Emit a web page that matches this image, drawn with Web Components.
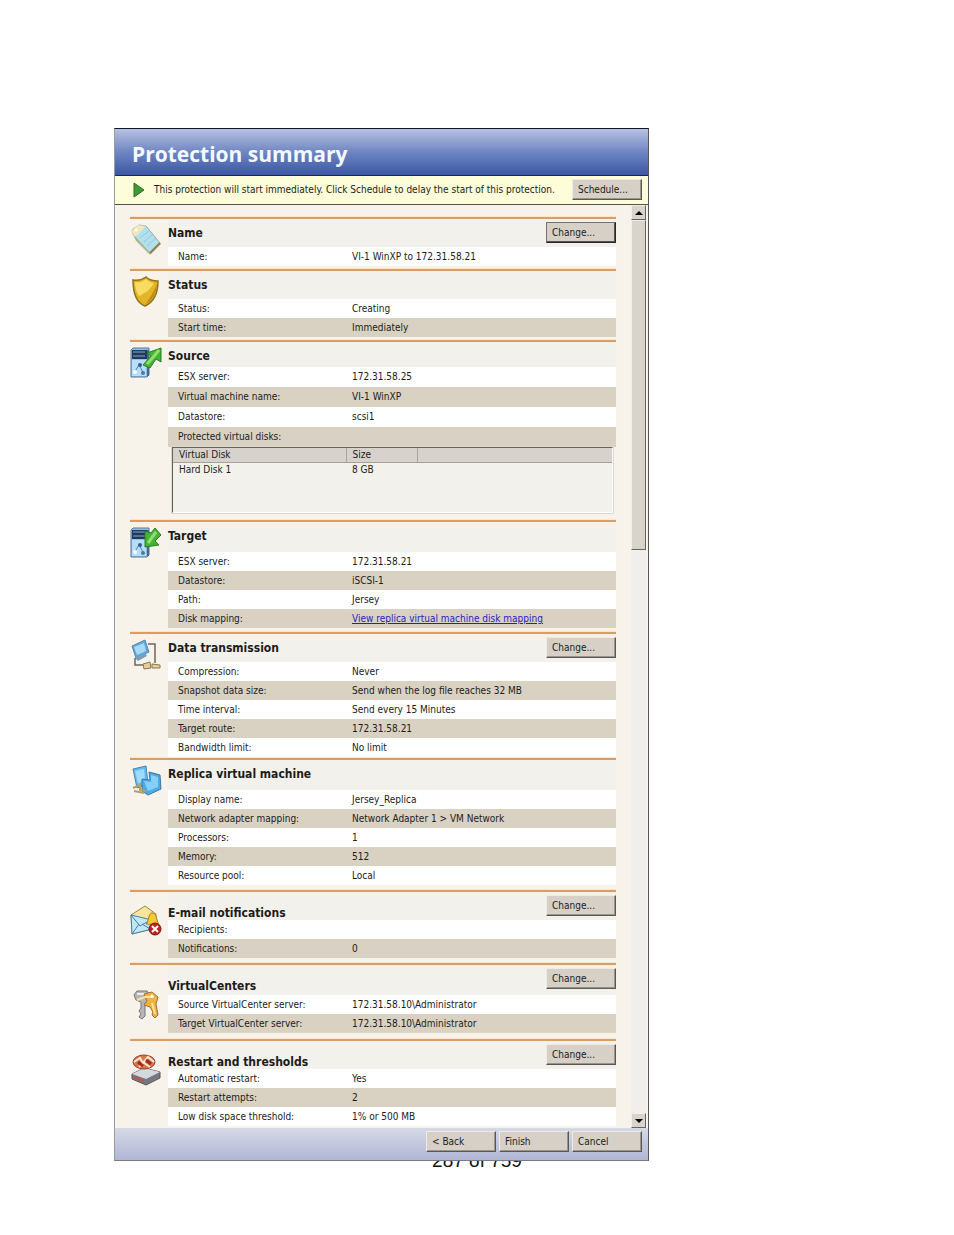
<!DOCTYPE html>
<html lang="en">
<head>
<meta charset="utf-8">
<title>Protection summary</title>
<style>
    body{
        margin: 0;
        background: white;
        color: #1c1c1c;
        font: 10px/19px "DejaVu Sans Condensed", "DejaVu Sans", sans-serif;
    }
    #page{
        display: grid;
        grid-template-columns: 114fr 535fr 305fr;
        padding-top: 128px;
    }
    #page ps-window{
        grid-column: 2;
    }
    #page-number{
        margin: -11px 0 0;
        text-align: center;
        font: 19px/22px "Liberation Sans", Arial, sans-serif;
        color: #111;
    }
    .roomy{
        --head: 30px;
    }
    .dense{
        --head: 25px;
        --row: 20px;
    }
    a{
        color: #2a1cc0;
    }
</style>
</head>
<body>

<main id="page">
    <ps-window heading="Protection summary">
        <ps-notice slot="notice">
            This protection will start immediately. Click Schedule to delay the start of this protection.
            <ps-button slot="action">Schedule...</ps-button>
        </ps-notice>

        <ps-section heading="Name" icon="tag" style="--tail:3px">
            <ps-button slot="action" focused>Change...</ps-button>
            <ps-row label="Name:">VI-1 WinXP to 172.31.58.21</ps-row>
        </ps-section>

        <ps-section heading="Status" icon="shield" style="--tail:3px">
            <ps-row label="Status:">Creating</ps-row>
            <ps-row label="Start time:" shaded>Immediately</ps-row>
        </ps-section>

        <ps-section heading="Source" icon="source" class="dense" style="--tail:7px">
            <ps-row label="ESX server:">172.31.58.25</ps-row>
            <ps-row label="Virtual machine name:" shaded>VI-1 WinXP</ps-row>
            <ps-row label="Datastore:">scsi1</ps-row>
            <ps-row label="Protected virtual disks:" shaded></ps-row>
            <ps-disks></ps-disks>
        </ps-section>

        <ps-section heading="Target" icon="target" class="roomy" style="--tail:4px">
            <ps-row label="ESX server:">172.31.58.21</ps-row>
            <ps-row label="Datastore:" shaded>iSCSI-1</ps-row>
            <ps-row label="Path:">Jersey</ps-row>
            <ps-row label="Disk mapping:" shaded><a href="#mapping">View replica virtual machine disk mapping</a></ps-row>
        </ps-section>

        <ps-section heading="Data transmission" icon="transmit" style="--tail:1px">
            <ps-button slot="action">Change...</ps-button>
            <ps-row label="Compression:">Never</ps-row>
            <ps-row label="Snapshot data size:" shaded>Send when the log file reaches 32 MB</ps-row>
            <ps-row label="Time interval:">Send every 15 Minutes</ps-row>
            <ps-row label="Target route:" shaded>172.31.58.21</ps-row>
            <ps-row label="Bandwidth limit:">No limit</ps-row>
        </ps-section>

        <ps-section heading="Replica virtual machine" icon="replica" class="roomy" style="--tail:5px">
            <ps-row label="Display name:">Jersey_Replica</ps-row>
            <ps-row label="Network adapter mapping:" shaded>Network Adapter 1 &gt; VM Network</ps-row>
            <ps-row label="Processors:">1</ps-row>
            <ps-row label="Memory:" shaded>512</ps-row>
            <ps-row label="Resource pool:">Local</ps-row>
        </ps-section>

        <ps-section heading="E-mail notifications" icon="mail" low style="--tail:5px">
            <ps-button slot="action">Change...</ps-button>
            <ps-row label="Recipients:"></ps-row>
            <ps-row label="Notifications:" shaded>0</ps-row>
        </ps-section>

        <ps-section heading="VirtualCenters" icon="keys" class="roomy" low style="--tail:6px;--icon-top:24px">
            <ps-button slot="action">Change...</ps-button>
            <ps-row label="Source VirtualCenter server:">172.31.58.10\Administrator</ps-row>
            <ps-row label="Target VirtualCenter server:" shaded>172.31.58.10\Administrator</ps-row>
        </ps-section>

        <ps-section heading="Restart and thresholds" icon="disk" low style="--tail:2px">
            <ps-button slot="action">Change...</ps-button>
            <ps-row label="Automatic restart:">Yes</ps-row>
            <ps-row label="Restart attempts:" shaded>2</ps-row>
            <ps-row label="Low disk space threshold:">1% or 500 MB</ps-row>
        </ps-section>

        <ps-button slot="buttons">&lt; Back</ps-button>
        <ps-button slot="buttons">Finish</ps-button>
        <ps-button slot="buttons">Cancel</ps-button>
    </ps-window>
</main>
<p id="page-number">287 of 759</p>

<script>
const server = `
    <path d="M1 3L3 1H19V28L17 30H1Z" fill="#8fc0e8" stroke="#56789c"/>
    <path d="M2 3H17V12H2Z" fill="#20395c"/>
    <path d="M3 5H15M3 9H15" stroke="#8ba7c6"/>
    <path d="M18 3V29" stroke="#3f6892" stroke-width="2"/>
    <path d="M2 13H16V29H2Z" fill="#b9dcf7"/>
    <path d="M4 26L9 18L14 27" stroke="#4887ba" fill="none"/>
    <circle cx="10" cy="18" r="2" fill="#2f6293"/><circle cx="5" cy="25" r="2" fill="#fff"/><circle cx="13" cy="26" r="2" fill="#477cad"/>`

const icons = {
    tag: `
        <path d="M1 7L8 1L16 2L31 20L20 31L6 17Z" fill="#b9b98e"/>
        <path d="M2 6L9 1L16 2L30 19L20 29L6 14Z" fill="#b4e0ec" stroke="#8fb3b0"/>
        <path d="M1 7L8 1L16 2L9 9L5 13Z" fill="#f3e6bd"/>
        <path d="M10 14L20 6M14 18L23 10M17 22L26 14" stroke="#8fc8dc"/>
        <path d="M20 29L30 19" stroke="#927e4e" stroke-width="2"/>
        <circle cx="6" cy="6" r="1.5" fill="#fff"/>`,
    shield: `
        <path d="M16 1C12 4 8 5 3 4C3 17 7 27 15 30C24 26 28 17 28 5C23 5 19 4 16 1Z" fill="#e3b426" stroke="#94711a" stroke-width="1.5"/>
        <path d="M16 3C12 6 9 7 5 6C5 12 7 17 9 20C14 18 20 14 24 7C21 7 18 5 16 3Z" fill="#f8dc62"/>
        <path d="M27 8C26 18 22 25 15 29C20 22 24 15 27 8Z" fill="#bd8c1b"/>`,
    source: server + `
        <path d="M13 18L21 9L17 6L31 1V15L26 12L20 21Z" fill="#45b335" stroke="#267c22"/>
        <path d="M17 17L25 8L29 3" stroke="#8fdd72" stroke-width="3" fill="none"/>`,
    target: server + `
        <path d="M31 8L25 1L21 6L15 4V20L29 18L25 14Z" fill="#45b335" stroke="#267c22"/>
        <path d="M26 5L18 16" stroke="#8fdd72" stroke-width="3"/>`,
    transmit: `
        <path d="M2 7L15 1L19 13L6 19Z" fill="#5aaae2" stroke="#5e87aa"/>
        <path d="M4 8L14 4L16 12L7 16Z" fill="#a9d9f8"/>
        <path d="M5 19L15 14L17 17L8 22Z" fill="#7f9cb8"/>
        <path d="M18 5H25V24M5 19V26H15" stroke="#6f675b" stroke-width="1.5" fill="none"/>
        <path d="M13 25L20 23L21 29L14 30ZM22 25L30 26V29H22Z" fill="#e4cf98" stroke="#887850"/>`,
    replica: `
        <path d="M3 4L16 1L18 19L7 23Z" fill="#67bbec" stroke="#4d82ac"/>
        <path d="M5 6L14 4L15 16L8 18Z" fill="#9edcfb"/>
        <path d="M12 14L20 15L19 7L30 10L31 24L18 30L12 26Z" fill="#4cabe5" stroke="#3c77a7"/>
        <path d="M14 16L21 17V10L28 12V22L18 26Z" fill="#86d0f8"/>
        <path d="M3 23L10 20V25L16 26M4 26L14 28" stroke="#b5a063" stroke-width="2" fill="none"/>`,
    mail: `
        <path d="M1 10L15 1L26 9V23L2 29Z" fill="#f5e69b" stroke="#9e8c40"/>
        <path d="M1 10L22 15V24L2 29Z" fill="#bfe9fb" stroke="#4b7ca5"/>
        <path d="M1 10L10 21L22 14M2 29L9 19M22 25L12 19" stroke="#4b7ca5" fill="none"/>
        <path d="M16 19C19 17 18 8 22 8C27 8 26 15 29 20Z" fill="#f5ca34" stroke="#a57f18"/>
        <circle cx="25" cy="24" r="6" fill="#bd2421" stroke="#7d1513"/>
        <path d="M22 21L28 27M28 21L22 27" stroke="#fff" stroke-width="2"/>`,
    keys: `
        <path d="M4 6L7 2H17L20 6V11L15 14V27L12 30L9 28L11 25L9 22L11 19V13L6 11Z" fill="#b8b5b5" stroke="#777"/>
        <path d="M7 5H16" stroke="#eee" stroke-width="2"/>
        <path d="M14 5L22 3L28 8L26 15L28 26L25 29L22 26L23 23L20 18L14 16L17 12Z" fill="#f0b243" stroke="#a1722b"/>
        <path d="M7 11L15 8L24 8M22 14L25 25" stroke="#fbe39b" stroke-width="2" fill="none"/>
        <circle cx="22" cy="7" r="1.5" fill="#fff"/>`,
    disk: `
        <path d="M2 20L14 14L30 18V24L16 31L2 25Z" fill="#76777f" stroke="#55565c"/>
        <path d="M2 20L14 14L30 18L16 25Z" fill="#d5d8df"/>
        <path d="M4 23L14 27" stroke="#c45145" stroke-width="2"/>
        <ellipse cx="14" cy="8" rx="11" ry="7" fill="#d97845" stroke="#8e4631"/>
        <path d="M4 8L10 4L13 9L18 3L24 8M9 13L14 9L20 13" stroke="#f8e7da" stroke-width="2" fill="none"/>
        <path d="M8 8L13 12M16 6L21 10" stroke="#a92a1e" stroke-width="3"/>`
}

class PsButton extends HTMLElement {
    constructor() {
        super();
        this.attachShadow({mode:'open'})

        this.shadowRoot.innerHTML = `
        <style>
            :host{
                display: block;
            }
            button{
                display: block;
                box-sizing: border-box;
                width: 70px;
                height: 21px;
                padding: 0 5px;
                border: 1px solid;
                border-color: #eeebe5 #5b5851 #5b5851 #eeebe5;
                box-shadow: inset -1px -1px #99958c;
                background: #d6d0c7;
                color: inherit;
                font: inherit;
                text-align: left;
            }
            :host([focused]) button{
                border-color: #77736b #2a2926 #2a2926 #77736b;
                box-shadow: inset -1px -1px #55524c;
            }
        </style>
        <button type="button"><slot></slot></button>
        `
    }
}

class PsNotice extends HTMLElement {
    constructor() {
        super();
        this.attachShadow({mode:'open'})

        this.shadowRoot.innerHTML = `
        <style>
            :host{
                display: flex;
                align-items: center;
                height: 27px;
                padding: 0 6px 1px 18px;
                border-bottom: 1px solid #55544c;
                background: #fdfdd9;
            }
            svg{
                flex: none;
                margin-right: 9px;
            }
            p{
                flex: 1;
                margin: 0;
                white-space: nowrap;
            }
        </style>
        <svg width="12" height="16" viewBox="0 0 12 16"><path d="M1 1L11 8L1 15Z" fill="#3f9a34" stroke="#2c6d27"/></svg>
        <p><slot></slot></p>
        <slot name="action"></slot>
        `
    }
}

class PsSection extends HTMLElement {
    constructor() {
        super();
        this.attachShadow({mode:'open'})

        this.shadowRoot.innerHTML = `
        <style>
            :host{
                display: grid;
                grid-template-columns: 38px 1fr;
                padding-bottom: var(--tail);
                border-top: 2px solid #dc9d62;
                box-shadow: 0 -1px #fbe6cb;
            }
            svg{
                margin-top: var(--icon-top, 5px);
            }
            :host([low]) svg{
                margin-top: var(--icon-top, 13px);
            }
            #icon{
                height: 0;
            }
            header{
                display: flex;
                align-items: flex-start;
                justify-content: space-between;
                height: var(--head, 28px);
                background: #f2f1eb;
            }
            h2{
                margin: 0;
                font-size: 12px;
                line-height: 28px;
            }
            :host([low]) h2{
                padding-top: 14px;
                line-height: 14px;
            }
            slot[name=action]{
                display: block;
                padding-top: 3px;
            }
        </style>
        <div id="icon"><svg width="32" height="32" viewBox="0 0 32 32" fill="none">${icons[this.getAttribute('icon')]}</svg></div>
        <div>
            <header>
                <h2>${this.getAttribute('heading')}</h2>
                <slot name="action"></slot>
            </header>
            <slot></slot>
        </div>
        `
    }
}

class PsRow extends HTMLElement {
    constructor() {
        super();
        this.attachShadow({mode:'open'})

        this.shadowRoot.innerHTML = `
        <style>
            :host{
                display: grid;
                grid-template-columns: 174px 1fr;
                height: var(--row, 19px);
                padding-left: 10px;
                line-height: var(--row, 19px);
                background: white;
                white-space: nowrap;
            }
            :host([shaded]){
                background: #d9d1c2;
            }
        </style>
        <span>${this.getAttribute('label')}</span>
        <span><slot></slot></span>
        `
    }
}

class PsDisks extends HTMLElement {
    constructor() {
        super();
        this.attachShadow({mode:'open'})

        this.shadowRoot.innerHTML = `
        <style>
            :host{
                display: block;
                box-sizing: border-box;
                height: 66px;
                margin: 0 3px 0 4px;
                border: 1px solid;
                border-color: #65625c #fff #fff #65625c;
                outline: 1px solid #dcdad0;
                background: #f2f1eb;
            }
            table{
                width: 100%;
                border-collapse: collapse;
                table-layout: fixed;
            }
            th, td{
                padding: 0 6px;
                font-weight: normal;
                line-height: 14px;
                text-align: left;
            }
            th{
                border-right: 1px solid #aaa69f;
                border-bottom: 1px solid #a5a19a;
                background: #d7d2cb;
            }
            th:last-child{
                border-right: 0;
            }
        </style>
        <table>
            <colgroup><col style="width:173px"><col style="width:71px"><col></colgroup>
            <thead><tr><th>Virtual Disk</th><th>Size</th><th></th></tr></thead>
            <tbody><tr><td>Hard Disk 1</td><td>8 GB</td><td></td></tr></tbody>
        </table>
        `
    }
}

class PsScrollbar extends HTMLElement {
    constructor() {
        super();
        this.attachShadow({mode:'open'})

        this.shadowRoot.innerHTML = `
        <style>
            :host{
                display: flex;
                flex-direction: column;
                width: 15px;
                background: #f1efeb;
            }
            button, #thumb{
                box-sizing: border-box;
                border: 1px solid;
                border-color: #f1eee9 #66635d #66635d #f1eee9;
                background: #d8d3cb;
            }
            button{
                display: grid;
                place-items: center;
                height: 15px;
                padding: 0;
            }
            #track{
                flex: 1;
            }
            #thumb{
                height: 37%;
            }
        </style>
        <button type="button" aria-label="Scroll up"><svg width="8" height="4"><path d="M0 4L4 0L8 4Z"/></svg></button>
        <div id="track"><div id="thumb"></div></div>
        <button type="button" aria-label="Scroll down"><svg width="8" height="4"><path d="M0 0H8L4 4Z"/></svg></button>
        `
    }
}

class PsWindow extends HTMLElement {
    constructor() {
        super();
        this.attachShadow({mode:'open'})

        this.shadowRoot.innerHTML = `
        <style>
            :host{
                display: block;
                position: relative;
                z-index: 1;
                border: 1px solid;
                border-color: #12172c #55575c #777b86 #9a9ca3;
                background: #f7f3ea;
            }
            #title{
                padding: 4px 17px 0;
                border-bottom: 1px solid #20284a;
                background: linear-gradient(#b7c1e2, #6f86c2 50%, #3a57a6);
                color: #f4f8ff;
            }
            h1{
                margin: 0;
                font: 700 21px/42px "Open Sans", sans-serif;
            }
            #content{
                display: flex;
            }
            #sections{
                flex: 1;
                padding: 12px 15px 0;
            }
            ps-scrollbar{
                margin-right: 2px;
            }
            footer{
                display: flex;
                justify-content: flex-end;
                gap: 3px;
                padding: 3px 6px 8px;
                background: linear-gradient(#d6d9e6, #b0b7d4);
            }
        </style>
        <div id="title"><h1>${this.getAttribute('heading')}</h1></div>
        <slot name="notice"></slot>
        <div id="content">
            <div id="sections"><slot></slot></div>
            <ps-scrollbar></ps-scrollbar>
        </div>
        <footer><slot name="buttons"></slot></footer>
        `
    }
}

customElements.define('ps-button',PsButton)
customElements.define('ps-notice',PsNotice)
customElements.define('ps-row',PsRow)
customElements.define('ps-disks',PsDisks)
customElements.define('ps-section',PsSection)
customElements.define('ps-scrollbar',PsScrollbar)
customElements.define('ps-window',PsWindow)
</script>
</body>
</html>
